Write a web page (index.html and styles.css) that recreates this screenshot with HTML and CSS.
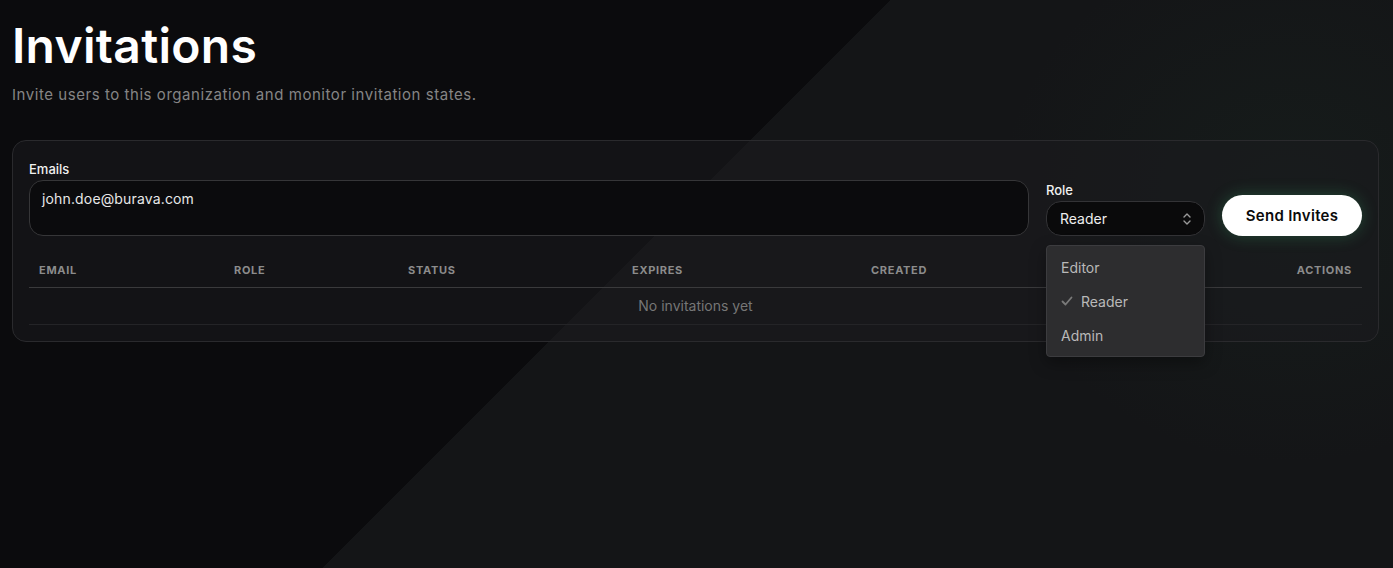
FILE: index.html
```html
<!DOCTYPE html>
<html lang="en">
<head>
<meta charset="UTF-8">
<meta name="viewport" content="width=device-width, initial-scale=1.0">
<title>Invitations</title>
<link rel="stylesheet" href="styles.css">
</head>
<body>
  <div class="page">
    <h1 class="title">Invitations</h1>
    <p class="subtitle">Invite users to this organization and monitor invitation states.</p>

    <div class="card">
      <div class="invite-row">
        <div class="field field-emails">
          <label class="label" for="emails">Emails</label>
          <div class="textarea" id="emails">john.doe@burava.com</div>
        </div>

        <div class="field field-role">
          <label class="label">Role</label>
          <div class="select-wrap">
            <div class="select">
              <span>Reader</span>
              <svg class="chevrons" width="10" height="14" viewBox="0 0 10 14" fill="none" stroke="#9a9a9a" stroke-width="1.4" stroke-linecap="round" stroke-linejoin="round">
                <path d="M2 5 L5 2 L8 5" />
                <path d="M2 9 L5 12 L8 9" />
              </svg>
            </div>
            <div class="menu">
              <div class="menu-item">Editor</div>
              <div class="menu-item selected">
                <svg class="check" width="12" height="12" viewBox="0 0 12 12" fill="none" stroke="#7a7a7a" stroke-width="1.8" stroke-linecap="round" stroke-linejoin="round">
                  <path d="M1.5 6.5 L4.5 9.5 L10.5 2.5" />
                </svg>
                Reader
              </div>
              <div class="menu-item">Admin</div>
            </div>
          </div>
        </div>

        <button class="send-btn">Send Invites</button>
      </div>

      <table class="invites">
        <thead>
          <tr>
            <th class="col-email">Email</th>
            <th class="col-role">Role</th>
            <th class="col-status">Status</th>
            <th class="col-expires">Expires</th>
            <th class="col-created">Created</th>
            <th class="col-actions">Actions</th>
          </tr>
        </thead>
        <tbody>
          <tr>
            <td colspan="6" class="empty">No invitations yet</td>
          </tr>
        </tbody>
      </table>
    </div>
  </div>
</body>
</html>
```

FILE: styles.css
```css
html, body {
  height: 100%;
}

body {
  margin: 0;
  font-family: Inter, "Noto Sans", sans-serif;
  color: #f2f2f2;
  background:
    radial-gradient(ellipse 420px 380px at 1290px 200px, rgba(40, 90, 60, 0.10), transparent 70%),
    linear-gradient(135deg, #0b0b0d 45.4%, #141517 45.4%);
  overflow: hidden;
}

.page {
  padding: 14px 14px 0 12px;
}

.title {
  font-size: 48px;
  font-weight: 600;
  letter-spacing: 0.3px;
  line-height: 1;
  margin: 8px 0 0 0;
  color: #ffffff;
}

.subtitle {
  font-size: 15px;
  letter-spacing: 0.55px;
  color: #858585;
  margin: 15px 0 0 0;
  line-height: 20px;
}

.card {
  margin-top: 35px;
  border: 1px solid #2a2a2d;
  border-radius: 14px;
  background: rgba(28, 28, 31, 0.55);
  padding: 20px 16px 16px 16px;
}

.invite-row {
  display: flex;
  align-items: flex-end;
  gap: 17px;
}

.field {
  display: flex;
  flex-direction: column;
}

.field-emails {
  flex: 1;
}

.field-role {
  width: 159px;
}

.label {
  font-size: 13px;
  font-weight: 500;
  color: #f0f0f0;
  margin-bottom: 3px;
  line-height: 16px;
}

.textarea {
  border: 1px solid #363638;
  border-radius: 14px;
  background: #0b0b0d;
  padding: 9px 12px;
  box-sizing: border-box;
  height: 56px;
  font-size: 14px;
  letter-spacing: 0.15px;
  color: #e8e8e8;
}

.select-wrap {
  position: relative;
}

.select {
  height: 35px;
  box-sizing: border-box;
  border: 1px solid #333336;
  border-radius: 15px;
  background: #0a0a0b;
  display: flex;
  align-items: center;
  justify-content: space-between;
  padding: 0 12px 0 13px;
  font-size: 14px;
  color: #eeeeee;
}

.menu {
  position: absolute;
  top: 44px;
  left: 0;
  width: 159px;
  box-sizing: border-box;
  background: #2d2d2f;
  border: 1px solid #3c3c3f;
  border-radius: 4px;
  padding: 4px 0;
  z-index: 10;
  box-shadow: 0 6px 16px rgba(0, 0, 0, 0.35);
}

.menu-item {
  height: 34px;
  display: flex;
  align-items: center;
  padding: 0 14px;
  font-size: 14px;
  color: #b9b9b9;
}

.menu-item.selected {
  gap: 8px;
}

.send-btn {
  height: 41px;
  width: 140px;
  border: none;
  border-radius: 21px;
  background: #ffffff;
  color: #0b0b0b;
  font-family: inherit;
  font-size: 15px;
  font-weight: 600;
  letter-spacing: 0.3px;
  box-shadow: 0 0 16px rgba(60, 190, 120, 0.28);
  cursor: pointer;
}

.invites {
  width: 100%;
  border-collapse: collapse;
  margin-top: 15px;
}

.invites th {
  text-align: left;
  font-size: 11px;
  font-weight: 700;
  letter-spacing: 0.7px;
  text-transform: uppercase;
  color: #8c8c8c;
  padding: 12px 10px 10px 10px;
  border-bottom: 1px solid #3a3a3c;
}

.col-email { width: 175px; }
.col-role { width: 154px; }
.col-status { width: 204px; }
.col-expires { width: 219px; }

.invites th.col-actions {
  text-align: right;
}

.empty {
  text-align: center;
  font-size: 14px;
  color: #767676;
  padding: 10px;
  line-height: 16px;
  border-bottom: 1px solid #242427;
}
```
